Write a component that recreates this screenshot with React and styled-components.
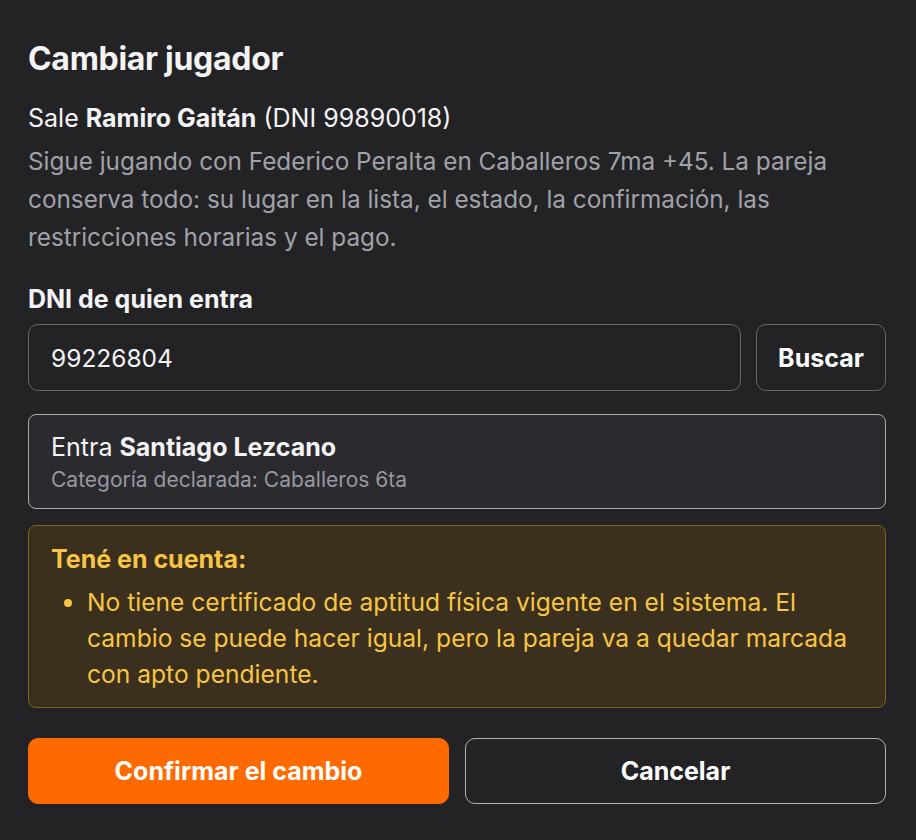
import React from "react";
import styled, { createGlobalStyle } from "styled-components";

const Global = createGlobalStyle`
  html, body {
    margin: 0;
    background: #232326;
  }
  body {
    font-family: Inter, "Noto Sans", "Liberation Sans", sans-serif;
    color: #f4f4f5;
  }
`;

const Dialog = styled.section`
  padding: 39px 30px 36px 28px;
  display: flex;
  flex-direction: column;
`;

const Title = styled.h2`
  margin: 0 0 22px;
  font-size: 32px;
  font-weight: 700;
  line-height: 40px;
  letter-spacing: -0.3px;
`;

const Leaving = styled.p`
  margin: 0 0 7px;
  font-size: 25px;
  line-height: 34px;
  color: #f4f4f5;

  strong { font-weight: 700; }
`;

const Note = styled.p`
  margin: 0 0 28px;
  font-size: 24.3px;
  line-height: 38px;
  color: #a1a1a8;
`;

const Label = styled.label`
  display: block;
  font-size: 25px;
  font-weight: 700;
  line-height: 30px;
  margin-bottom: 10px;
`;

const SearchRow = styled.div`
  display: flex;
  gap: 15px;
  margin-bottom: 23px;
`;

const Input = styled.input`
  flex: 1;
  min-width: 0;
  height: 67px;
  box-sizing: border-box;
  padding: 0 22px;
  border: 1px solid #66666b;
  border-radius: 10px;
  background: transparent;
  color: #f4f4f5;
  font: inherit;
  font-size: 24.5px;
  outline: none;
`;

const Button = styled.button`
  height: ${(p) => p.$h || 67}px;
  box-sizing: border-box;
  border-radius: 10px;
  font: inherit;
  font-size: 25px;
  font-weight: 700;
  cursor: pointer;
  color: #ffffff;
  background: ${(p) => (p.$primary ? "#ff6a00" : "transparent")};
  border: 1px solid ${(p) => (p.$primary ? "#ff6a00" : p.$light ? "#b2b2b6" : "#66666b")};
`;

const SearchButton = styled(Button)`
  width: 130px;
`;

const PlayerCard = styled.div`
  border: 1px solid #ababaf;
  border-radius: 8px;
  background: #2b2a2f;
  padding: 15px 22px 12px;
  margin-bottom: 16px;
`;

const PlayerName = styled.div`
  font-size: 25px;
  line-height: 34px;

  strong { font-weight: 700; }
`;

const PlayerMeta = styled.div`
  font-size: 21px;
  line-height: 32px;
  color: #98989f;
`;

const Warning = styled.div`
  border: 1px solid #7e6522;
  border-radius: 8px;
  background: #3b301d;
  color: #f7c543;
  padding: 17px 22px 15px;
  margin-bottom: 30px;
`;

const WarningTitle = styled.div`
  font-size: 25px;
  font-weight: 700;
  line-height: 32px;
  margin-bottom: 9px;
`;

const WarningList = styled.ul`
  margin: 0;
  padding-left: 36px;
  font-size: 24.6px;
  line-height: 36px;
`;

const Actions = styled.div`
  display: grid;
  grid-template-columns: 1fr 1fr;
  gap: 16px;
`;

export default function App() {
  return (
    <>
      <Global />
      <Dialog>
        <Title>Cambiar jugador</Title>
        <Leaving>
          Sale <strong>Ramiro Gaitán</strong> (DNI 99890018)
        </Leaving>
        <Note>
          Sigue jugando con Federico Peralta en Caballeros 7ma +45. La pareja
          conserva todo: su lugar en la lista, el estado, la confirmación, las
          restricciones horarias y el pago.
        </Note>

        <Label htmlFor="dni">DNI de quien entra</Label>
        <SearchRow>
          <Input id="dni" defaultValue="99226804" />
          <SearchButton>Buscar</SearchButton>
        </SearchRow>

        <PlayerCard>
          <PlayerName>
            Entra <strong>Santiago Lezcano</strong>
          </PlayerName>
          <PlayerMeta>Categoría declarada: Caballeros 6ta</PlayerMeta>
        </PlayerCard>

        <Warning>
          <WarningTitle>Tené en cuenta:</WarningTitle>
          <WarningList>
            <li>
              No tiene certificado de aptitud física vigente en el sistema. El
              cambio se puede hacer igual, pero la pareja va a quedar marcada
              con apto pendiente.
            </li>
          </WarningList>
        </Warning>

        <Actions>
          <Button $primary $h={66}>Confirmar el cambio</Button>
          <Button $light $h={66}>Cancelar</Button>
        </Actions>
      </Dialog>
    </>
  );
}
